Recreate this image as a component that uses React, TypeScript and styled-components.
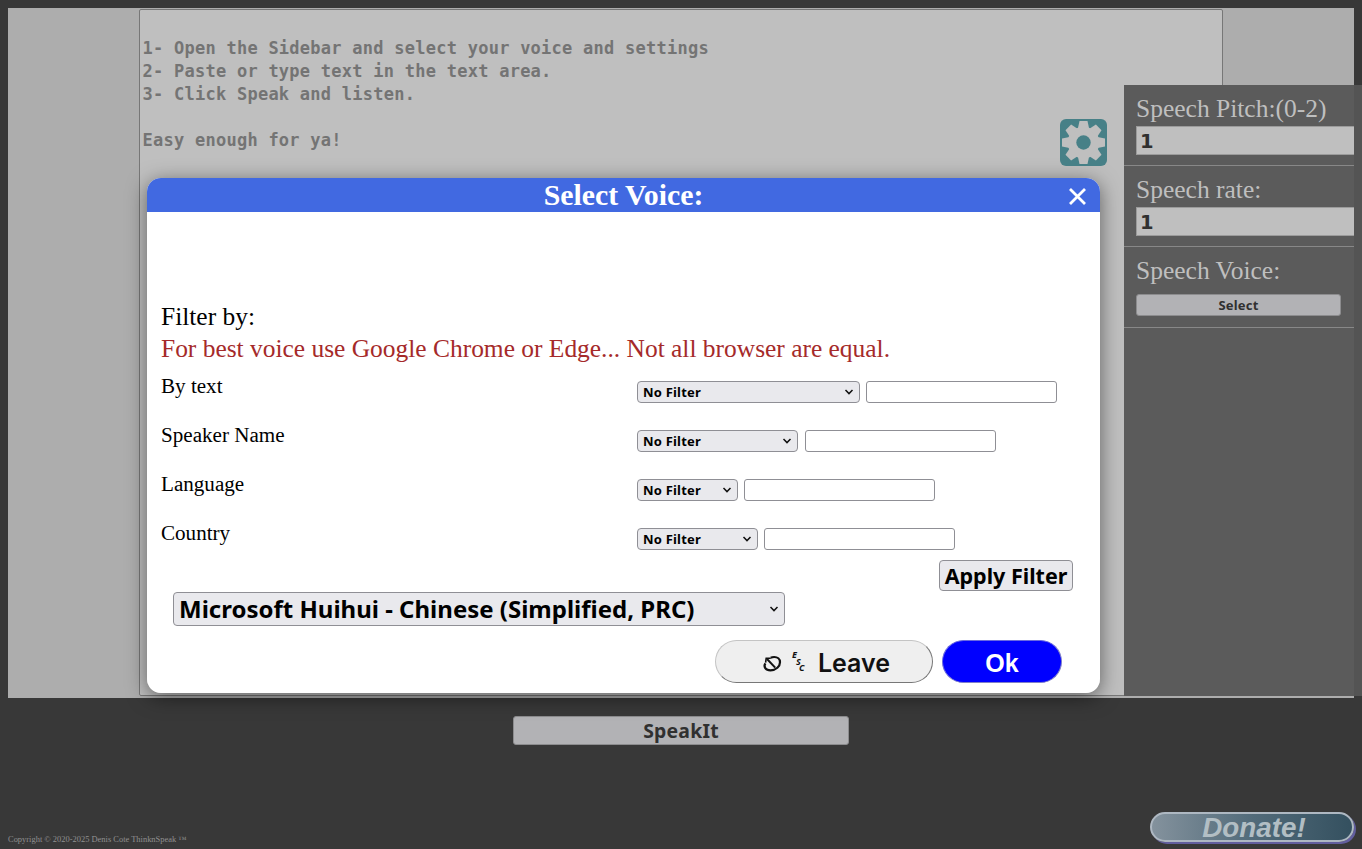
import React from 'react';
import styled, { createGlobalStyle } from 'styled-components';

const serif = '"Liberation Serif", "Times New Roman", serif';
const sans = '"Noto Sans", "DejaVu Sans", sans-serif';

const GlobalStyle = createGlobalStyle`
  * { box-sizing: border-box; }
  html, body { margin: 0; background: #383838; overflow: hidden; }
  body { font-family: ${serif}; }
`;

const Page = styled.div`
  position: relative;
  height: 849px;
  padding: 8px;
  display: flex;
  flex-direction: column;
  overflow: hidden;
`;

const Editor = styled.main`
  height: 690px;
  flex: none;
  background: #adadad;
  display: flex;
  justify-content: center;
  padding: 1px 0 2px;
`;

const TextArea = styled.div`
  width: 1084px;
  border: 1px solid #777;
  border-radius: 2px;
  background: #bfbfbf;
  padding: 27px 2.5px;
  font: bold 17px/23px "DejaVu Sans Mono", monospace;
  letter-spacing: 0.255px;
  color: #747474;
  white-space: pre;
`;

const Actions = styled.div`
  display: flex;
  justify-content: center;
  padding-top: 18px;
`;

const DimButton = styled.button<{ $w: number; $h: number; $size: number; $drop?: number }>`
  width: ${p => p.$w}px;
  height: ${p => p.$h}px;
  padding: ${p => p.$drop ?? 0}px 0 0;
  border: 1px solid #8c8c8e;
  border-radius: 3px;
  background: #b2b2b5;
  color: #303030;
  font: bold ${p => p.$size}px/1 ${sans};
  letter-spacing: 0.2px;
`;

const Footer = styled.footer`
  margin-top: auto;
  display: flex;
  justify-content: space-between;
  align-items: flex-end;
  height: 40px;
`;

const Copyright = styled.span`
  font-size: 8.45px;
  line-height: 10px;
  color: #909090;
  margin-bottom: -3px;
  white-space: nowrap;
`;

const Donate = styled.div`
  width: 204px;
  height: 30px;
  margin: 0 0 -1px 0;
  border: 2px solid #aeb8c2;
  border-radius: 15px;
  background: linear-gradient(90deg, #84929d, #526b7a 50%, #34505f);
  box-shadow: 2px 2px 0 #625e9e;
  color: #b2bec4;
  font: italic bold 27.8px/27px "Liberation Sans", Arial, sans-serif;
  text-align: center;
  padding-left: 4px;
`;

const GearButton = styled.div`
  position: absolute;
  left: 1060px;
  top: 119px;
  width: 47px;
  height: 47px;
  border-radius: 6px;
  background: #478087;
`;

const Sidebar = styled.aside`
  position: absolute;
  left: 1124px;
  top: 85px;
  width: 238px;
  height: 611px;
  background: #5b5b5b;
  border-right: 8px solid #545454;
`;

const Setting = styled.section`
  height: 81px;
  padding: 9px 0 0 12px;
  border-bottom: 1px solid #888;
  overflow: hidden;
  color: #bfbfbf;
  font-size: 25.5px;
  line-height: 30px;
`;

const SettingInput = styled.div`
  width: 230px;
  height: 29px;
  margin-top: 2px;
  border: 1px solid #9b9b9b;
  background: #bfbfbf;
  padding-left: 3px;
  font: bold 19.5px/29px "DejaVu Sans", sans-serif;
  color: #303030;
`;

const SelectWrap = styled.div`
  display: flex;
  padding-top: 8px;
`;

const Dialog = styled.div`
  position: absolute;
  left: 147px;
  top: 178px;
  width: 953px;
  height: 515px;
  border-radius: 14px;
  overflow: hidden;
  background: #fff;
  display: flex;
  flex-direction: column;
`;

const DialogShadow = styled.div`
  position: absolute;
  left: 147px;
  top: 178px;
  width: 953px;
  height: 515px;
  border-radius: 14px;
  box-shadow: 0 4px 20px rgba(0, 0, 0, 0.5);
`;

const TitleBar = styled.header`
  position: relative;
  flex: none;
  height: 34px;
  background: #4169e1;
  color: #fff;
  font: bold 29.8px/34px ${serif};
  text-align: center;
`;

const CloseIcon = styled.svg`
  position: absolute;
  right: 14px;
  top: 10px;
`;

const DialogBody = styled.div`
  flex: 1;
  padding: 90px 14px 10px;
  display: flex;
  flex-direction: column;
`;

const Heading = styled.div<{ $color: string }>`
  height: 32px;
  font-size: 25.45px;
  line-height: 30px;
  color: ${p => p.$color};
  white-space: nowrap;
`;

const FilterRow = styled.div`
  height: 49px;
  display: grid;
  grid-template-columns: 476px 1fr;
  align-items: start;
`;

const FilterLabel = styled.span`
  padding-top: 7px;
  font-size: 21.1px;
  line-height: 26px;
`;

const FilterControls = styled.div<{ $gap: number }>`
  display: flex;
  gap: ${p => p.$gap}px;
  padding-top: 15px;
`;

const SelectBox = styled.div<{ $w: number; $h: number; $size: number; $ls?: number }>`
  width: ${p => p.$w}px;
  height: ${p => p.$h}px;
  display: flex;
  align-items: center;
  justify-content: space-between;
  border: 1px solid #8f8f95;
  border-radius: 4px;
  background: #e9e9ed;
  padding: 0 5px;
  font: bold ${p => p.$size}px/1 ${sans};
  letter-spacing: ${p => p.$ls ?? 0}px;
  white-space: nowrap;
`;

const TextBox = styled.div`
  width: 191px;
  height: 22px;
  border: 1px solid #8f8f95;
  border-radius: 3px;
  background: #fff;
`;

const ApplyRow = styled.div`
  display: flex;
  justify-content: flex-end;
  height: 32px;
  padding-right: 13px;
  margin-top: -2px;
`;

const ApplyButton = styled.button`
  width: 134px;
  height: 31px;
  padding: 0;
  border: 1px solid #8f8f95;
  border-radius: 4px;
  background: #e9e9ed;
  color: #000;
  font: bold 21.5px/1 ${sans};
  white-space: nowrap;
`;

const VoiceRow = styled.div`
  padding-left: 12px;
`;

const ButtonRow = styled.div`
  display: flex;
  justify-content: flex-end;
  gap: 9px;
  padding-right: 24px;
  margin-top: auto;
`;

const PillButton = styled.button<{ $w: number; $primary?: boolean }>`
  width: ${p => p.$w}px;
  height: 43px;
  padding: 4px 0 0 ${p => (p.$primary ? 0 : 4)}px;
  display: flex;
  align-items: center;
  justify-content: center;
  border-radius: 22px;
  border: 1px solid;
  border-color: ${p => (p.$primary ? '#6a6ae0 #8080c8 #8080c8 #6a6ae0' : '#c4c4c4 #777 #777 #c4c4c4')};
  background: ${p => (p.$primary ? '#0000ff' : '#efefef')};
  color: ${p => (p.$primary ? '#fff' : '#111')};
  font: ${p => (p.$primary ? 'bold 25px/1 "Liberation Sans", sans-serif' : '600 25px/1 Inter, sans-serif')};
`;

const EscapeMark = styled.span`
  display: flex;
  flex-direction: column;
  width: 14px;
  margin: -3px 12px 0 10px;
  font: italic bold 9px/6.5px "Noto Sans", sans-serif;
  text-align: left;
  span:nth-child(2) { padding-left: 4px; }
  span:nth-child(3) { padding-left: 7px; }
`;

const Chevron = () => (
  <svg width="10" height="8" viewBox="0 0 10 8">
    <path d="M1.5 2 L5 5.6 L8.5 2" fill="none" stroke="#111" strokeWidth="1.5" />
  </svg>
);

const Gear = () => (
  <svg width="47" height="47" viewBox="-23.5 -23.5 47 47">
    <circle r="15.8" fill="#bfbfbf" />
    {[0, 45, 90, 135, 180, 225, 270, 315].map(a => (
      <path key={a} d="M-5.6 -14 L-4 -21.5 L4 -21.5 L5.6 -14 Z" fill="#bfbfbf" transform={`rotate(${a})`} />
    ))}
    <circle r="7.2" fill="#478087" />
  </svg>
);

const LeaveIcon = () => (
  <svg width="20" height="18" viewBox="0 0 20 18" fill="none" stroke="#111">
    <path d="M3.4 8.4 C1.2 11.6 3.6 15.3 8.4 15.3 C14.2 15.3 18 11.2 18 7.2 C18 3.8 15.4 2 12.2 2 C10.8 2 9.6 2.3 8.8 2.8" strokeWidth="2.2" />
    <path d="M5 4 L13.2 12.6" strokeWidth="2" />
    <path d="M3.6 7.6 L4.2 3.2 L8.8 3.2" strokeWidth="1.6" />
  </svg>
);

const filters = [
  { label: 'By text', width: 223, gap: 6 },
  { label: 'Speaker Name', width: 161, gap: 7 },
  { label: 'Language', width: 101, gap: 6 },
  { label: 'Country', width: 121, gap: 6 },
];

const instructions = `1- Open the Sidebar and select your voice and settings
2- Paste or type text in the text area.
3- Click Speak and listen.

Easy enough for ya!`;

export default function App() {
  return (
    <Page>
      <GlobalStyle />
      <Editor>
        <TextArea>{instructions}</TextArea>
      </Editor>
      <Actions>
        <DimButton $w={336} $h={29} $size={19.4} $drop={1}>SpeakIt</DimButton>
      </Actions>
      <Footer>
        <Copyright>Copyright © 2020-2025 Denis Cote ThinknSpeak ™</Copyright>
        <Donate>Donate!</Donate>
      </Footer>
      <DialogShadow />
      <GearButton><Gear /></GearButton>
      <Sidebar>
        <Setting>Speech Pitch:(0-2)<SettingInput>1</SettingInput></Setting>
        <Setting>Speech rate:<SettingInput>1</SettingInput></Setting>
        <Setting>
          Speech Voice:
          <SelectWrap><DimButton $w={205} $h={22} $size={13}>Select</DimButton></SelectWrap>
        </Setting>
      </Sidebar>
      <Dialog>
        <TitleBar>
          Select Voice:
          <CloseIcon width="17" height="17" viewBox="0 0 17 17">
            <path d="M1 1 L16 16 M16 1 L1 16" stroke="#fff" strokeWidth="2.8" />
          </CloseIcon>
        </TitleBar>
        <DialogBody>
          <Heading $color="#000">Filter by:</Heading>
          <Heading $color="#a52a2a">For best voice use Google Chrome or Edge... Not all browser are equal.</Heading>
          {filters.map(f => (
            <FilterRow key={f.label}>
              <FilterLabel>{f.label}</FilterLabel>
              <FilterControls $gap={f.gap}>
                <SelectBox $w={f.width} $h={22} $size={13} $ls={0.2}>No Filter<Chevron /></SelectBox>
                <TextBox />
              </FilterControls>
            </FilterRow>
          ))}
          <ApplyRow><ApplyButton>Apply Filter</ApplyButton></ApplyRow>
          <VoiceRow>
            <SelectBox $w={612} $h={34} $size={24}>
              Microsoft Huihui - Chinese (Simplified, PRC)<Chevron />
            </SelectBox>
          </VoiceRow>
          <ButtonRow>
            <PillButton $w={218}>
              <LeaveIcon />
              <EscapeMark><span>E</span><span>S</span><span>C</span></EscapeMark>
              Leave
            </PillButton>
            <PillButton $w={120} $primary>Ok</PillButton>
          </ButtonRow>
        </DialogBody>
      </Dialog>
    </Page>
  );
}
